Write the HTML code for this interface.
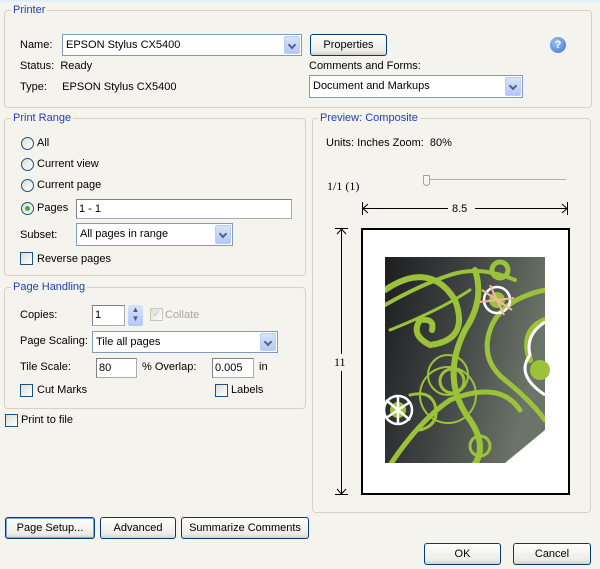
<!DOCTYPE html>
<html><head><meta charset="utf-8"><style>
*{box-sizing:border-box;margin:0;padding:0}
body{width:600px;height:569px;background:#f4f3ee;font-family:"Liberation Sans",sans-serif;font-size:11px;color:#000;position:relative;overflow:hidden}
.a{position:absolute;white-space:nowrap}
.grp{position:absolute;border:1px solid #d5d2c2;border-radius:4px}
.lg{position:absolute;background:#f4f3ee;color:#1f3fb6;padding:0 2px;white-space:nowrap;line-height:13px}
.box{position:absolute;background:#fff;border:1px solid #7f9db9;padding-left:3px;line-height:20px}
.tb{position:absolute;background:#fff;border:1px solid #a5acb5;border-top-color:#808080;border-left-color:#808080;padding-left:2px;line-height:18px}
.dd{position:absolute;right:1px;top:1px;bottom:1px;width:16px;background:linear-gradient(#d6e3fc,#b4c8f6);border:1px solid #b9cdf5;border-radius:2px}
.dd:after{content:"";position:absolute;left:4px;top:5px;width:4px;height:4px;border-right:2px solid #4d6185;border-bottom:2px solid #4d6185;transform:rotate(45deg)}
.btn{position:absolute;border:1px solid #003c74;border-radius:3px;background:linear-gradient(#fff,#ecebe6 80%,#d6d0c5);text-align:center;line-height:20px}
.rd{position:absolute;width:13px;height:13px;border:1px solid #1c5180;border-radius:50%;background:linear-gradient(135deg,#dcdcd6,#fff)}
.cb{position:absolute;width:13px;height:13px;border:1px solid #1c5180;background:linear-gradient(135deg,#dcdcd6,#fff)}
</style></head><body>
<div style="position:absolute;left:0;top:0;width:600px;height:2px;background:#dff0fb"></div>

<div class="grp" style="left:4px;top:10px;width:588px;height:98px"></div>
<div class="lg" style="left:11px;top:4px">Printer</div>
<div class="a" style="left:20px;top:39px">Name:</div>
<div class="box" style="left:62px;top:34px;width:240px;height:22px">EPSON Stylus CX5400<div class="dd"></div></div>
<div class="btn" style="left:310px;top:34px;width:77px;height:22px">Properties</div>
<div class="a" style="left:550px;top:37px;width:16px;height:16px;border-radius:50%;background:radial-gradient(circle at 40% 35%,#9cc3f5,#3a72c8);color:#fff;font-weight:bold;text-align:center;line-height:16px;font-size:11px">?</div>
<div class="a" style="left:20px;top:60px">Status:&nbsp; Ready</div>
<div class="a" style="left:20px;top:81px">Type:&nbsp;&nbsp;&nbsp;&nbsp; EPSON Stylus CX5400</div>
<div class="a" style="left:309px;top:60px">Comments and Forms:</div>
<div class="box" style="left:309px;top:75px;width:214px;height:23px">Document and Markups<div class="dd"></div></div>

<div class="grp" style="left:4px;top:118px;width:302px;height:158px"></div>
<div class="lg" style="left:11px;top:112px">Print Range</div>
<div class="rd" style="left:21px;top:137px"></div><div class="a" style="left:37px;top:137px">All</div>
<div class="rd" style="left:21px;top:158px"></div><div class="a" style="left:37px;top:158px">Current view</div>
<div class="rd" style="left:21px;top:179px"></div><div class="a" style="left:37px;top:179px">Current page</div>
<div class="rd" style="left:21px;top:202px"><div style="position:absolute;left:3px;top:3px;width:5px;height:5px;border-radius:50%;background:#3cb034"></div></div><div class="a" style="left:37px;top:202px">Pages</div>
<div class="tb" style="left:76px;top:199px;width:216px;height:20px">1 - 1</div>
<div class="a" style="left:20px;top:229px">Subset:</div>
<div class="box" style="left:76px;top:223px;width:157px;height:23px">All pages in range<div class="dd"></div></div>
<div class="cb" style="left:20px;top:252px"></div><div class="a" style="left:37px;top:253px">Reverse pages</div>

<div class="grp" style="left:4px;top:287px;width:302px;height:122px"></div>
<div class="lg" style="left:11px;top:281px">Page Handling</div>
<div class="a" style="left:20px;top:309px">Copies:</div>
<div class="tb" style="left:92px;top:305px;width:33px;height:21px">1</div>
<div class="a" style="left:128px;top:305px;width:15px;height:21px;background:linear-gradient(#d6e3fc,#b4c8f6);border-radius:2px;color:#4d6185;font-size:8px;text-align:center;line-height:9px">▲<br>▼</div>
<div class="cb" style="left:150px;top:308px;border-color:#c9c7ba;color:#c9c7ba;font-size:10px;line-height:11px;text-align:center">✓</div><div class="a" style="left:165px;top:309px;color:#aca899">Collate</div>
<div class="a" style="left:20px;top:335px">Page Scaling:</div>
<div class="box" style="left:92px;top:331px;width:186px;height:22px">Tile all pages<div class="dd"></div></div>
<div class="a" style="left:20px;top:361px">Tile Scale:</div>
<div class="tb" style="left:96px;top:358px;width:41px;height:20px">80</div>
<div class="a" style="left:142px;top:361px">% Overlap:</div>
<div class="tb" style="left:212px;top:358px;width:42px;height:20px">0.005</div>
<div class="a" style="left:259px;top:361px">in</div>
<div class="cb" style="left:20px;top:384px"></div><div class="a" style="left:37px;top:384px">Cut Marks</div>
<div class="cb" style="left:215px;top:384px"></div><div class="a" style="left:231px;top:384px">Labels</div>
<div class="cb" style="left:5px;top:414px"></div><div class="a" style="left:21px;top:414px">Print to file</div>

<div class="grp" style="left:312px;top:118px;width:279px;height:395px"></div>
<div class="lg" style="left:318px;top:112px">Preview: Composite</div>
<div class="a" style="left:326px;top:137px">Units: Inches Zoom:&nbsp; 80%</div>
<div class="a" style="left:327px;top:179px;font-family:'Liberation Serif',serif;font-size:12px">1/1 (1)</div>
<div class="a" style="left:428px;top:179px;width:138px;height:1px;background:#b0b0a8"></div>
<div class="a" style="left:423px;top:175px;width:7px;height:11px;border:1px solid #a0a0a0;border-radius:1px 1px 4px 4px;background:#f6f6f2"></div>
<svg class="a" style="left:0;top:0" width="600" height="569">
<g stroke="#000" fill="none" stroke-width="1">
<line x1="362" y1="208.5" x2="448" y2="208.5"/><line x1="475" y1="208.5" x2="568" y2="208.5"/>
<line x1="362.5" y1="202" x2="362.5" y2="215"/><line x1="567.5" y1="202" x2="567.5" y2="215"/>
<path d="M368 204 L363 208.5 L368 213 M562 204 L567 208.5 L562 213"/>
<line x1="341.5" y1="229" x2="341.5" y2="354"/><line x1="341.5" y1="371" x2="341.5" y2="494"/>
<line x1="335" y1="228.5" x2="348" y2="228.5"/><line x1="335" y1="494.5" x2="348" y2="494.5"/>
<path d="M337 234 L341.5 229 L346 234 M337 489 L341.5 494 L346 489"/>
</g>
<text x="452" y="212" font-family="Liberation Sans,sans-serif" font-size="11">8.5</text>
<text x="334" y="366" font-family="Liberation Serif,serif" font-size="12">11</text>
<rect x="362" y="229" width="207" height="265" fill="#fff" stroke="#000" stroke-width="2"/>
<defs><linearGradient id="g" x1="0" y1="0" x2="1" y2="0.3"><stop offset="0" stop-color="#1e1d1f"/><stop offset="0.5" stop-color="#3f4443"/><stop offset="1" stop-color="#6b7468"/></linearGradient>
<clipPath id="c"><rect x="385" y="257" width="160" height="206"/></clipPath></defs>
<rect x="385" y="257" width="160" height="206" fill="url(#g)"/>
<g clip-path="url(#c)" fill="none" stroke="#9cc23a" stroke-linecap="round">
<path d="M385 290 Q430 260 455 300 Q470 340 430 345 Q410 335 420 320 Q435 318 432 330" stroke-width="6"/>
<path d="M385 305 Q420 285 450 275 Q480 265 515 280" stroke-width="4"/>
<path d="M390 330 Q440 310 470 290" stroke-width="3"/>
<path d="M475 270 Q485 300 465 330 Q440 380 470 420 Q490 450 470 470" stroke-width="6"/>
<path d="M545 290 Q500 300 490 330 Q480 360 505 380 Q530 400 545 420" stroke-width="5"/>
<path d="M390 465 Q420 420 450 400 Q500 380 520 410" stroke-width="5"/>
<circle cx="452" cy="381" r="12" stroke-width="3"/><circle cx="448" cy="375" r="20" stroke-width="2"/>
<circle cx="448" cy="395" r="28" stroke-width="2"/>
<circle cx="500" cy="270" r="8" stroke-width="5"/><circle cx="480" cy="446" r="10" stroke-width="3"/>
<path d="M410 395 Q430 390 435 405 Q440 425 420 430" stroke-width="3"/>
<path d="M545 320 Q520 330 530 360" stroke-width="6"/>
</g>
<polygon points="545,430 545,463 505,463" fill="#fff"/>
<g fill="#9cc23a"><circle cx="497" cy="300" r="8"/><circle cx="398" cy="410" r="8"/><circle cx="540" cy="370" r="10"/></g>
<g fill="none" stroke="#fff" stroke-width="2.5">
<circle cx="497" cy="300" r="13"/><path d="M482 290 L512 310 M490 285 L504 315 M480 302 L514 298" stroke="#f0b8a0" stroke-width="2"/>
<circle cx="398" cy="410" r="14"/><path d="M386 400 L410 420 M398 396 L398 424 M386 418 L410 402"/>
<path d="M545 322 Q525 335 530 355 Q515 375 545 395" stroke-width="3"/>
</g>
</svg>

<div class="btn" style="left:5px;top:517px;width:90px;height:22px;border-color:#003c74;box-shadow:inset 0 0 0 1px #7ea6e0">Page Setup...</div>
<div class="btn" style="left:100px;top:517px;width:76px;height:22px">Advanced</div>
<div class="btn" style="left:181px;top:517px;width:128px;height:22px">Summarize Comments</div>
<div class="btn" style="left:424px;top:543px;width:77px;height:22px">OK</div>
<div class="btn" style="left:513px;top:543px;width:78px;height:22px">Cancel</div>
</body></html>
